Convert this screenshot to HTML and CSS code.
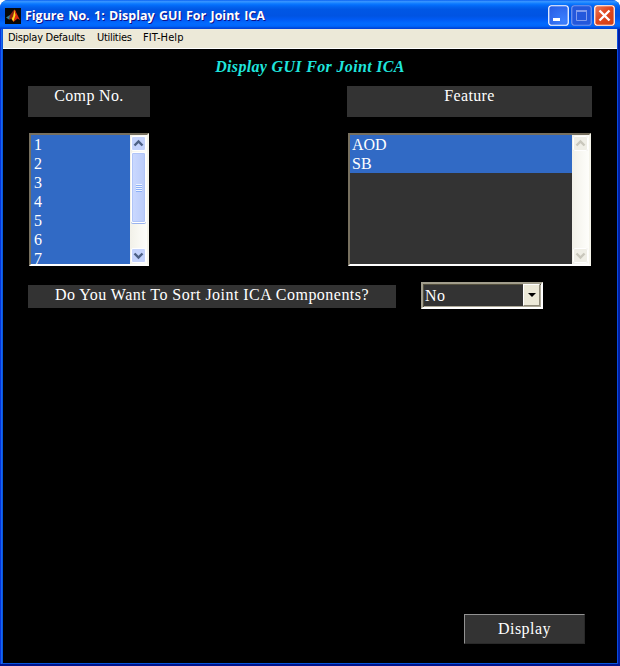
FILE: index.html
```html
<!DOCTYPE html>
<html lang="en">
<head>
<meta charset="utf-8">
<title>Figure No. 1: Display GUI For Joint ICA</title>
<link rel="stylesheet" href="styles.css">
</head>
<body>
<div class="window">
  <header class="titlebar">
    <svg class="logo" width="16" height="16" viewBox="0 0 16 16">
      <rect width="16" height="16" fill="#080808"/>
      <path d="M1 9.500 5 7 7 10 4 11.500Z" fill="#347d91"/>
      <path d="M5 7 8 3 9.500 1.500 8 8 6.500 11 4 11.500Z" fill="#8f2414"/>
      <path d="M9.500 1.500 11 4 8.500 14 6.500 11 8 8Z" fill="#fa8a10"/>
      <path d="M10 2 12.500 7 15 12 12.500 10.500 8.500 14 9 7Z" fill="#d62b10"/>
      <path d="M9.300 3 10.500 7 8.500 13 7 11 8.500 8Z" fill="#ffdd20"/>
    </svg>
    <h1 class="caption">Figure No. 1: Display GUI For Joint ICA</h1>
    <div class="controls">
      <svg class="control" viewBox="0 0 21 21"><rect class="face" x=".75" y=".75" width="19.500" height="19.500" rx="2.500"/><path d="M5 13h7v3H5z" fill="#fff"/></svg>
      <svg class="control inactive" viewBox="0 0 21 21"><rect class="face" x=".75" y=".75" width="19.500" height="19.500" rx="2.500"/><path d="M5.500 6v9.500h10V6M5 6.500h11" fill="none" stroke="#829ded"/><path d="M5 5h11v2H5z" fill="#829ded"/></svg>
      <svg class="control close" viewBox="0 0 21 21"><rect class="face" x=".75" y=".75" width="19.500" height="19.500" rx="2.500"/><path d="M5.500 5.500l10 10M15.500 5.500l-10 10" stroke="#fff" stroke-width="2.400"/></svg>
    </div>
  </header>
  <nav class="menubar"><span class="menu-defaults">Display Defaults</span><span class="menu-utilities">Utilities</span><span class="menu-help">FIT-Help</span></nav>
  <main class="figure">
    <h2 class="heading">Display GUI For Joint ICA</h2>
    <div class="columns">
      <section class="components">
        <div class="label"><span class="comp-text">Comp No.</span></div>
        <div class="listbox">
          <ul class="items filled"><li>1</li><li>2</li><li>3</li><li>4</li><li>5</li><li>6</li><li>7</li></ul>
          <div class="scrollbar">
            <svg class="arrow" viewBox="0 0 17 17"><rect x="1.500" y="1.500" width="14" height="14" rx="1.500"/><path d="M4.500 10.500l4-4 4 4"/></svg>
            <div class="thumb"><i></i></div>
            <svg class="arrow last" viewBox="0 0 17 17"><rect x="1.500" y="1.500" width="14" height="14" rx="1.500"/><path d="M4.500 6.500l4 4 4-4"/></svg>
          </div>
        </div>
      </section>
      <section class="features">
        <div class="label"><span class="feature-text">Feature</span></div>
        <div class="listbox">
          <ul class="items"><li>AOD</li><li>SB</li></ul>
          <div class="scrollbar disabled">
            <svg class="arrow" viewBox="0 0 17 17"><rect x="1.500" y="1.500" width="14" height="14" rx="1.500"/><path d="M4.500 10.500l4-4 4 4"/></svg>
            <svg class="arrow last" viewBox="0 0 17 17"><rect x="1.500" y="1.500" width="14" height="14" rx="1.500"/><path d="M4.500 6.500l4 4 4-4"/></svg>
          </div>
        </div>
      </section>
    </div>
    <div class="sort-row">
      <div class="question"><span class="question-text">Do You Want To Sort Joint ICA Components?</span></div>
      <div class="combo"><span class="value">No</span><span class="drop"><svg width="8" height="4" viewBox="0 0 8 4"><path d="M0 0h8L4 4Z"/></svg></span></div>
    </div>
    <button class="display">Display</button>
  </main>
</div>
</body>
</html>
```
FILE: styles.css
```css
* { box-sizing: border-box; }
body { margin: 0; background: #fff; }
h1, h2, ul { margin: 0; padding: 0; }
.window {
  width: 620px; height: 666px; padding: 0 3px 3px;
  display: flex; flex-direction: column;
  border-radius: 8px 8px 0 0;
  background: linear-gradient(90deg, #0831d9 0 1px, #1666ee 1px 2px, #0855dd 2px 3px, #0855dd 3px 617px, #0a4be0 617px 618px, #001ea0 618px);
  box-shadow: inset 0 -2px #00138c;
  overflow: hidden;
}
.titlebar {
  height: 29px; flex: none; margin: 0 -3px; padding: 2px 5px 0 5px;
  display: flex; align-items: center; gap: 4px;
  background: linear-gradient(#0058ee 0, #3a93ff 4%, #288eff 8%, #127dff 12%, #036ffc 17%, #0262ee 24%, #0057e5 33%, #0054e3 55%, #005bf5 68%, #026afe 80%, #0066fc 90%, #0050e0 95%, #003dd7 100%);
}
.logo { flex: none; }
.caption {
  flex: 1; color: #fff; white-space: nowrap;
  font: bold 12.5px/20px "Open Sans", sans-serif; letter-spacing: -.03px; word-spacing: 1.2px;
  text-shadow: 1px 1px #0f1089;
}
.controls { display: flex; gap: 2px; }
.control { width: 21px; height: 21px; background: radial-gradient(circle at 75% 75%, #3c80ff, #2558e0); border-radius: 3px; }
.face { fill: none; stroke: #fff; stroke-width: 1.2; }
.inactive { background: #2458dc; }
.inactive .face { stroke: #7298ef; }
.close { background: linear-gradient(135deg, #ee8060, #e04820 45%, #cf3c12); }
.menubar {
  height: 20px; flex: none; padding-left: 5px; display: flex;
  background: #ece9d8; border-bottom: 1px solid #fff;
  font: 11px/18px "DejaVu Sans Condensed", "DejaVu Sans", sans-serif; font-stretch: condensed; color: #000; white-space: nowrap;
}
.menu-defaults { width: 89px; letter-spacing: -.25px; }
.menu-utilities { width: 46px; letter-spacing: -.3px; }
.menu-help { letter-spacing: .1px; }
.figure {
  flex: 1; display: flex; flex-direction: column; padding: 8px 25px 19px;
  background: #000; color: #fff; font: 16px/19px "Liberation Serif", serif;
}
.heading { height: 19px; text-align: center; color: #1fe5dd; font: italic bold 16px/19px "Liberation Serif", serif; letter-spacing: .33px; }
.columns { display: flex; justify-content: space-between; margin-top: 10px; }
.components { width: 122px; }
.features { width: 245px; }
.label { height: 31px; background: #333; text-align: center; line-height: 20px; letter-spacing: .35px; }
.listbox {
  display: flex; height: 133px; margin: 16px 1px 0;
  border: 2px solid; border-color: #77705f #f5f4ea #fff #77705f;
  background: #333; overflow: hidden;
}
.items { flex: 1; list-style: none; overflow: hidden; }
.items li { height: 19px; padding-left: 2px; background: #316ac5; }
.filled { background: #316ac5; }
.scrollbar { width: 17px; display: flex; flex-direction: column; background: linear-gradient(90deg, #f2f1e9, #fefefb); }
.arrow { width: 17px; height: 17px; flex: none; }
.arrow rect { fill: #c4d3fc; stroke: #fff; }
.arrow path { fill: none; stroke: #4d6185; stroke-width: 2.4; }
.last { margin-top: auto; }
.thumb {
  height: 71px; margin: 0 1px; display: flex; align-items: center; justify-content: center;
  border: 1px solid #fff; border-radius: 2px; box-shadow: inset 0 0 0 1px #b0c5f8, 0 1px #9ab4ee;
  background: linear-gradient(90deg, #cbd9ff, #b9cbf9);
}
.thumb i { width: 6px; height: 8px; background: repeating-linear-gradient(#eef4fe 0 1px, #8cb0f8 1px 2px); }
.disabled .arrow rect { fill: #efeee6; stroke: #fff; }
.disabled .arrow path { stroke: #c9c7bc; }
.disabled .arrow { filter: drop-shadow(0 0 .5px #cbc9bc); }
.filled li { padding-left: 3px; }
.sort-row { display: flex; margin-top: 16px; align-items: flex-start; }
.question { width: 368px; height: 23px; margin: 3px 25px 0 0; background: #333; text-align: center; line-height: 20px; letter-spacing: .47px; white-space: nowrap; }
.combo {
  width: 122px; height: 27px; display: flex; background: #333;
  border: 2px solid; border-color: #a19d8c #fff #fff #a19d8c;
  box-shadow: inset 1px 1px #55513f, inset -1px -1px #ada998;
}
.value { flex: 1; padding-left: 2px; line-height: 23px; letter-spacing: .5px; }
.drop {
  width: 17px; margin: 0 1px 1px 0; display: flex; align-items: center; justify-content: center;
  background: #ece9d8; border: 1px solid; border-color: #fff #8c8877 #8c8877 #fff;
}
.display {
  width: 121px; height: 30px; margin: auto 7px 0 auto; padding: 0;
  background: #333; color: #fff; font: 16px/28px "Liberation Serif", serif; letter-spacing: .45px;
  border: 1px solid; border-color: #929292 #292929 #292929 #929292;
}
```
